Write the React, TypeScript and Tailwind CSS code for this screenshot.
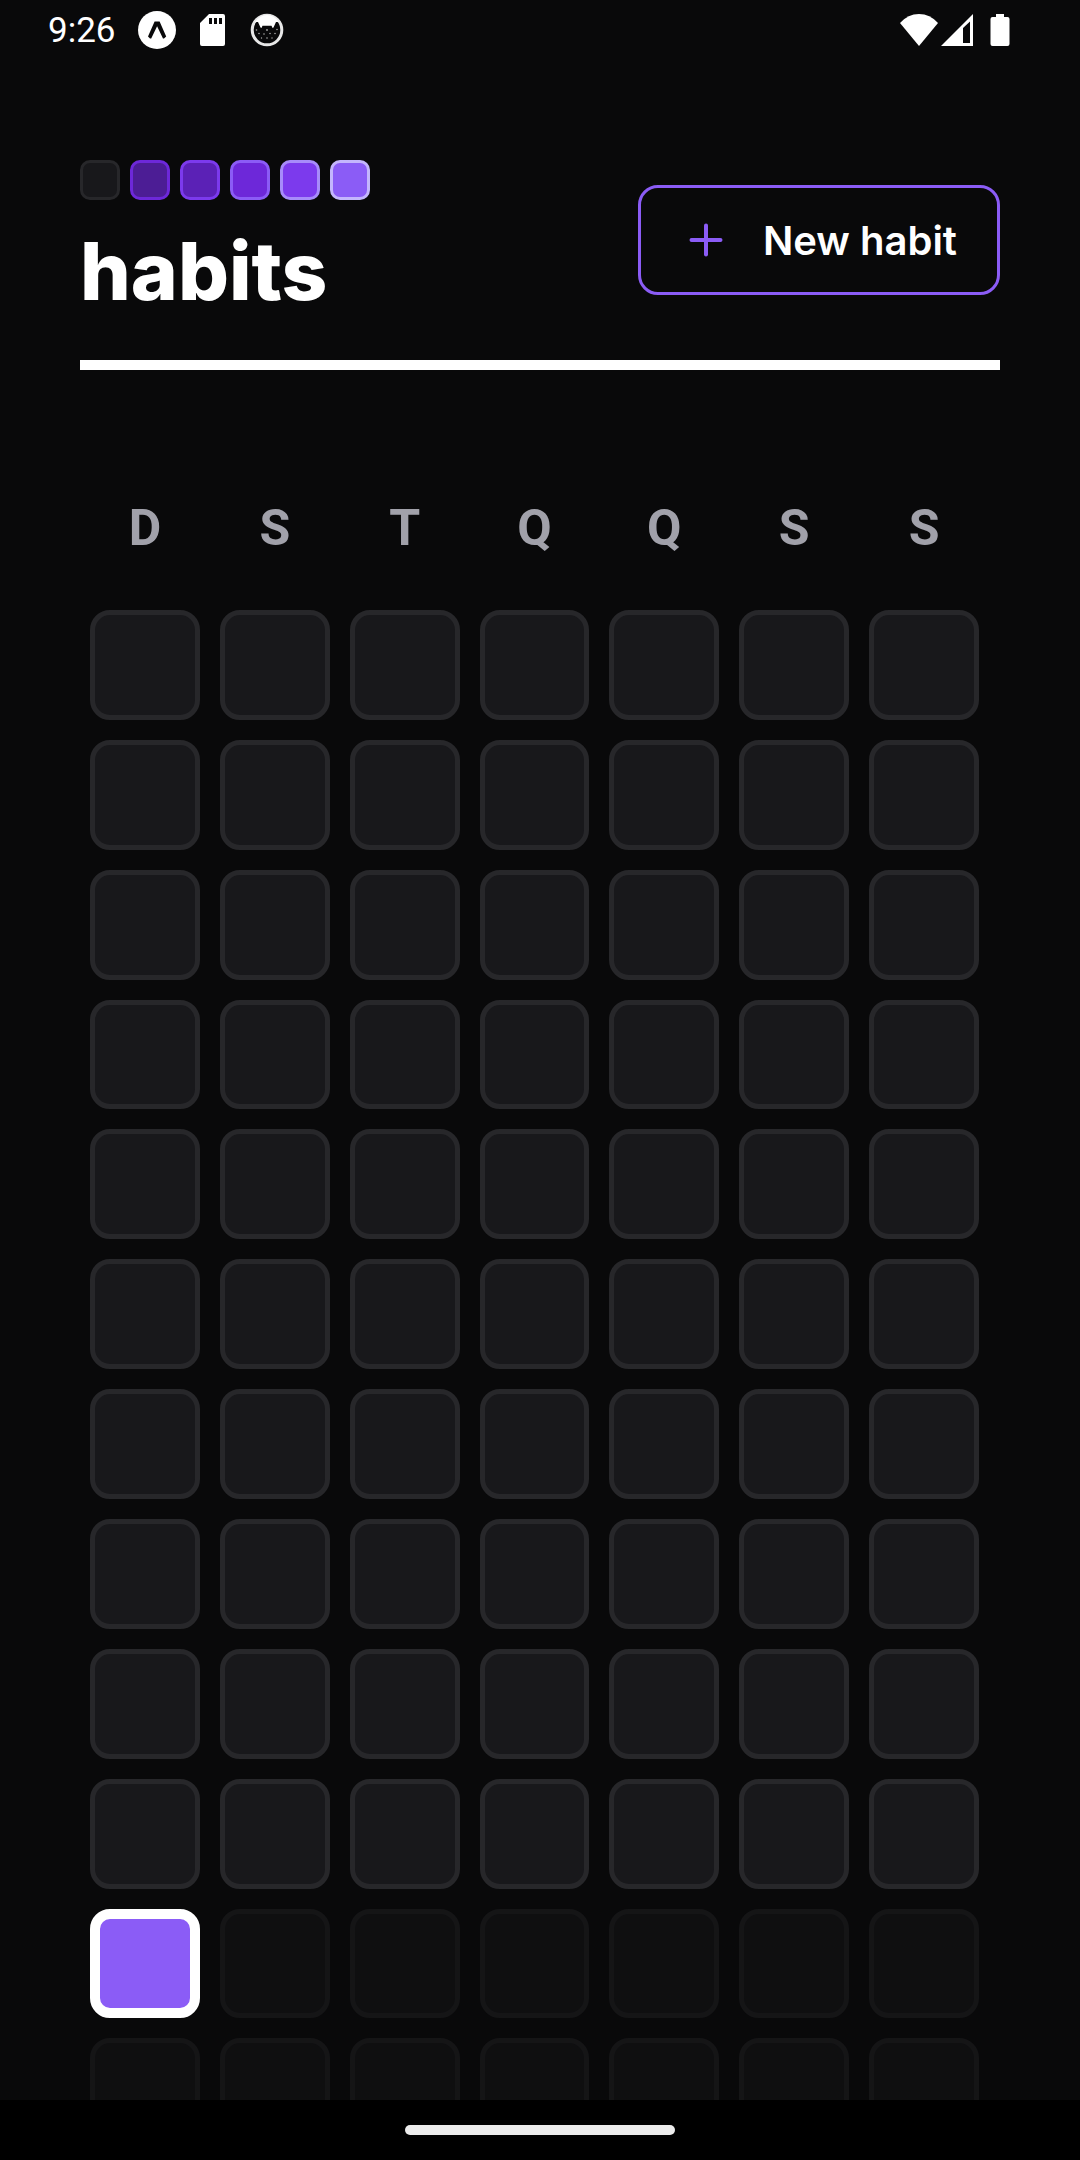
const LEVELS = [
  'bg-[#18181b] border-[#27272a]',
  'bg-[#4c1d95] border-[#6d28d9]',
  'bg-[#5b21b6] border-[#7c3aed]',
  'bg-[#6d28d9] border-[#8b5cf6]',
  'bg-[#7c3aed] border-[#a78bfa]',
  'bg-[#8b5cf6] border-[#c4b5fd]',
];

const WEEK_DAYS = ['D', 'S', 'T', 'Q', 'Q', 'S', 'S'];
const TODAY = 70;
const TOTAL_DAYS = 126;

function ExpoIcon() {
  return (
    <svg width="38" height="38" viewBox="0 0 38 38" aria-hidden="true">
      <circle cx="19" cy="19" r="19" fill="#fff" />
      <path
        d="M16.6 10.4 H21.6 L28.2 25.4 L26 27.4 H25 L19.1 15.2 L13.2 27.4 H12 L10 25.4 Z"
        fill="#09090a"
      />
    </svg>
  );
}

function SdCardIcon() {
  return (
    <svg width="26" height="32" viewBox="0 0 26 32" aria-hidden="true">
      <path
        fillRule="evenodd"
        fill="#fff"
        d="M9 0H23Q25 0 25 2V30Q25 32 23 32H2Q0 32 0 30V9ZM9 4V10H12V4ZM14 4V10H17V4ZM19 4V10H22V4Z"
      />
    </svg>
  );
}

function CatIcon() {
  return (
    <svg width="34" height="34" viewBox="0 0 34 34" aria-hidden="true">
      <circle cx="17" cy="17" r="14.8" fill="#09090a" stroke="#e8e8e8" strokeWidth="3" />
      <path
        d="M5 9 Q10 2 17 2 Q24 2 29 9 L26 9 L23.5 14.5 L22.5 15 L21.5 12.8 H12.5 L11.5 15 L10.5 14.5 L8 9 Z"
        fill="#fff"
      />
      <g fill="#a8a8a8">
        <circle cx="6.5" cy="17" r=".8" />
        <circle cx="9" cy="20.5" r=".8" />
        <circle cx="17" cy="17" r=".9" />
        <circle cx="27" cy="16.5" r=".8" />
        <circle cx="25" cy="20.5" r=".8" />
        <circle cx="14" cy="21" r=".8" />
        <circle cx="20" cy="20.5" r=".8" />
        <circle cx="17" cy="25" r=".8" />
        <circle cx="11.5" cy="25" r=".7" />
        <circle cx="22" cy="25" r=".7" />
      </g>
    </svg>
  );
}

function WifiIcon() {
  return (
    <svg width="38" height="32" viewBox="0 0 38 32" aria-hidden="true">
      <path d="M0 9 Q8 0 19 0 T38 9 L19 32Z" fill="#fff" />
    </svg>
  );
}

function SignalIcon() {
  return (
    <svg width="32" height="32" viewBox="0 0 32 32" aria-hidden="true">
      <path d="M0 32 L32 0V32Z M22 14V29H29V7.5Z" fill="#fff" fillRule="evenodd" />
    </svg>
  );
}

function BatteryIcon() {
  return (
    <svg width="20" height="32" viewBox="0 0 20 32" aria-hidden="true">
      <path
        d="M6 0H14V3H17.5Q19.5 3 19.5 5V30Q19.5 32 17.5 32H2.5Q.5 32 .5 30V5Q.5 3 2.5 3H6Z"
        fill="#fff"
      />
    </svg>
  );
}

function StatusBar() {
  return (
    <div className="flex h-15 shrink-0 items-center justify-between pr-[70px] pl-12 text-white">
      <div className="flex items-center">
        <span className="pt-0.5 font-['Roboto',sans-serif] text-[35px] leading-10">9:26</span>
        <div className="ml-[22px] flex items-center gap-6">
          <ExpoIcon />
          <SdCardIcon />
          <CatIcon />
        </div>
      </div>
      <div className="flex items-center">
        <WifiIcon />
        <div className="ml-[3px] flex items-center gap-[17px]">
          <SignalIcon />
          <BatteryIcon />
        </div>
      </div>
    </div>
  );
}

function Header() {
  return (
    <header className="mx-20 mt-[100px] flex shrink-0 items-center justify-between border-b-10 border-white pb-[40px]">
      <div>
        <div className="flex gap-[10px]">
          {LEVELS.map((level) => (
            <span key={level} className={`size-10 rounded-[10px] border-[3px] ${level}`} />
          ))}
        </div>
        <h1 className="pt-[22px] text-[80px] leading-[98px] font-extrabold text-white">habits</h1>
      </div>
      <button
        type="button"
        className="flex h-[110px] items-center gap-8 rounded-[20px] border-3 border-[#8b5cf6] px-10 text-[40px] font-semibold text-white"
      >
        <svg
          width="50"
          height="50"
          viewBox="0 0 50 50"
          fill="none"
          stroke="#8b5cf6"
          strokeWidth="4"
          strokeLinecap="round"
          aria-hidden="true"
        >
          <path d="M25 10.5V39.5M10.5 25H39.5" />
        </svg>
        <span className="pt-0.5">New habit</span>
      </button>
    </header>
  );
}

function dayStyle(index: number) {
  if (index === TODAY) return 'border-[10px] border-white bg-[#8b5cf6]';
  if (index > TODAY) return 'border-[5px] border-[#27272a] bg-[#18181b] opacity-40';
  return 'border-[5px] border-[#27272a] bg-[#18181b]';
}

export default function App() {
  return (
    <div className="flex h-screen flex-col overflow-hidden bg-[#09090a] font-['Inter',sans-serif]">
      <StatusBar />
      <Header />
      <main className="flex min-h-0 flex-1 flex-col pt-[120px] pr-[101px] pl-[90px]">
        <div className="grid shrink-0 grid-cols-7 gap-5 text-center font-['Roboto',sans-serif] text-[50px] leading-[76px] font-bold text-[#a1a1aa]">
          {WEEK_DAYS.map((day, index) => (
            <span key={index}>{day}</span>
          ))}
        </div>
        <div className="mt-11 grid min-h-0 flex-1 auto-rows-max grid-cols-7 gap-5 overflow-hidden">
          {Array.from({ length: TOTAL_DAYS }, (_, index) => (
            <button
              key={index}
              type="button"
              aria-label={`Day ${index + 1}`}
              className={`aspect-square rounded-[20px] ${dayStyle(index)}`}
            />
          ))}
        </div>
      </main>
      <div className="flex h-15 shrink-0 items-center justify-center bg-black">
        <div className="h-[10px] w-[270px] rounded-full bg-[#ececec]" />
      </div>
    </div>
  );
}
